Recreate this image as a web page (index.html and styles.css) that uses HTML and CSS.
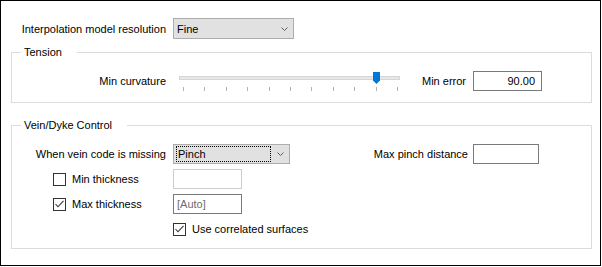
FILE: index.html
```html
<!DOCTYPE html>
<html lang="en">
<head>
  <meta charset="UTF-8">
  <title>Interpolation options</title>
  <link rel="stylesheet" href="styles.css">
</head>
<body>

<div class="frame">

  <div class="row top-row">
    <label class="lbl lbl-main">Interpolation model resolution</label>
    <div class="combo combo-fine">
      <span class="combo-text">Fine</span>
      <svg class="chev" width="7" height="4" viewBox="0 0 7 4"><polyline points="0.5,0.5 3.5,3.5 6.5,0.5" fill="none" stroke="#606060" stroke-width="1"/></svg>
    </div>
  </div>

  <fieldset class="group tension">
    <legend>Tension</legend>
    <div class="row">
      <label class="lbl lbl-col">Min curvature</label>
      <div class="slider">
        <div class="track"></div>
        <div class="ticks">
          <span></span><span></span><span></span><span></span><span></span><span></span>
          <span></span><span></span><span></span><span></span><span></span>
        </div>
        <svg class="thumb" width="7" height="12" viewBox="0 0 7 12"><path d="M0 0 H7 V8.5 L3.5 12 L0 8.5 Z" fill="#0078d7"/></svg>
      </div>
      <label class="lbl lbl-err">Min error</label>
      <input class="field field-err" value="90.00">
    </div>
  </fieldset>

  <fieldset class="group vein">
    <legend>Vein/Dyke Control</legend>

    <div class="row">
      <label class="lbl lbl-col">When vein code is missing</label>
      <div class="combo combo-pinch">
        <span class="combo-text focus">Pinch</span>
        <svg class="chev" width="7" height="4" viewBox="0 0 7 4"><polyline points="0.5,0.5 3.5,3.5 6.5,0.5" fill="none" stroke="#606060" stroke-width="1"/></svg>
      </div>
      <label class="lbl lbl-pinch">Max pinch distance</label>
      <input class="field field-pinch" value="">
    </div>

    <div class="row">
      <div class="check-col">
        <span class="box"></span>
        <span>Min thickness</span>
      </div>
      <input class="field field-thick off" value="">
    </div>

    <div class="row">
      <div class="check-col">
        <span class="box"><svg width="11" height="11" viewBox="0 0 11 11"><polyline points="1.5,5 4,7.8 9.5,1.8" fill="none" stroke="#333" stroke-width="1.1"/></svg></span>
        <span>Max thickness</span>
      </div>
      <input class="field field-thick auto" value="[Auto]">
    </div>

    <div class="row row-last">
      <div class="check">
        <span class="box"><svg width="11" height="11" viewBox="0 0 11 11"><polyline points="1.5,5 4,7.8 9.5,1.8" fill="none" stroke="#333" stroke-width="1.1"/></svg></span>
        <span>Use correlated surfaces</span>
      </div>
    </div>
  </fieldset>

</div>

</body>
</html>
```

FILE: styles.css
```css
* { box-sizing: border-box; }
body {
  margin: 0;
  background: #fff;
  font-family: "Liberation Sans", Arial, sans-serif;
  font-size: 11px;
  color: #000;
}
.frame {
  width: 601px;
  height: 266px;
  border: 1px solid #000;
  padding: 17px 8px 0 10px;
}

.row {
  display: flex;
  align-items: center;
  height: 20px;
}
.top-row { height: 21px; }
.lbl { white-space: nowrap; }
.lbl-main { width: 155px; text-align: right; margin-right: 7px; }
.lbl-col { width: 154px; text-align: right; margin-right: 7px; }
.lbl-err { width: 61px; text-align: right; margin-right: 7px; }
.lbl-pinch { width: 178px; text-align: right; margin-right: 5px; }

/* combo boxes */
.combo {
  display: flex;
  align-items: center;
  justify-content: space-between;
  background: #e1e1e1;
  border: 1px solid #adadad;
  padding: 0 5px 0 2px;
}
.combo-fine { width: 121px; height: 21px; }
.combo-pinch { width: 117px; height: 20px; }
.combo-text { padding: 0 1px; line-height: 14px; }
.combo-text.focus {
  width: 95px;
  height: 16px;
  border: 1px dotted #000;
  padding: 0 1px;
}

/* group boxes */
.group {
  margin: 0;
  padding: 0;
  min-width: 0;
  border: 1px solid #dcdcdc;
}
.group legend {
  margin-left: 9px;
  padding: 0 15px 0 3px;
  line-height: 13px;
}
.tension { margin-top: 7px; padding: 12px 0 11px; }
.vein { margin-top: 16px; padding: 12px 0 9px; }
.vein .row + .row { margin-top: 5px; }
.vein .row-last { margin-top: 8px; }

/* trackbar */
.slider {
  position: relative;
  width: 232px;
  height: 20px;
}
.track {
  width: 221px;
  height: 4px;
  margin: 5px 0 0 6px;
  background: #e7e7e7;
  border: 1px solid #d6d6d6;
}
.ticks {
  display: flex;
  justify-content: space-between;
  width: 215px;
  height: 4px;
  margin: 7px 0 0 10px;
}
.ticks span {
  width: 1px;
  height: 4px;
  background: #b4b4b4;
}
.thumb {
  position: absolute;
  left: 200px;
  top: 1px;
}

/* text fields */
.field {
  font: inherit;
  color: #000;
  background: #fff;
  border: 1px solid #7a7a7a;
  height: 20px;
  padding: 0 3px;
  outline: none;
}
.field-err { width: 69px; text-align: right; padding-right: 6px; }
.field-pinch { width: 66px; }
.field-thick { width: 69px; margin-left: 7px; }
.field.off { border-color: #cccccc; }
.field.auto { color: #6d6d6d; }

/* check boxes */
.check-col, .check {
  display: flex;
  align-items: center;
  gap: 6px;
  white-space: nowrap;
}
.check-col { width: 154px; padding-left: 41px; }
.check { margin-left: 161px; }
.box {
  display: flex;
  align-items: center;
  justify-content: center;
  width: 13px;
  height: 13px;
  border: 1px solid #333;
  background: #fff;
}
```
